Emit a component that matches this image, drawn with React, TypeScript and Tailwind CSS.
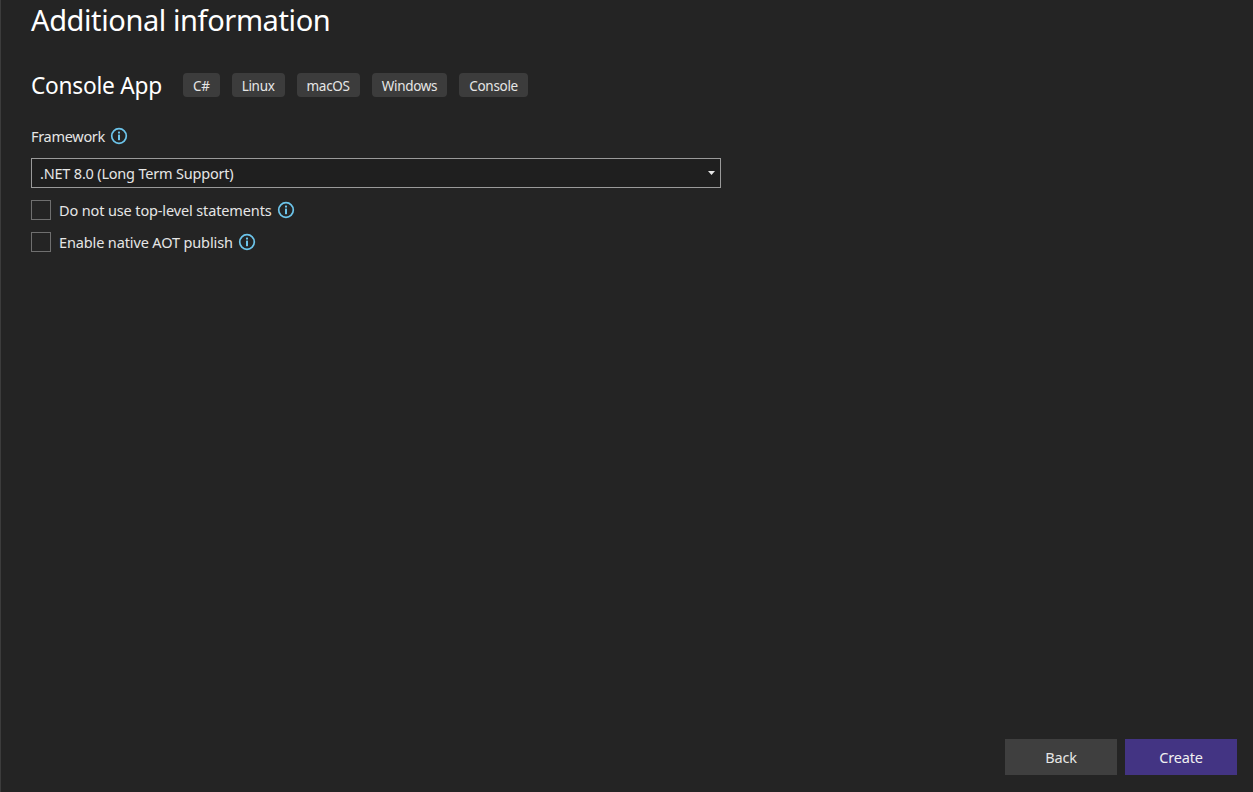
const tags = ["C#", "Linux", "macOS", "Windows", "Console"];

const InfoIcon = () => (
    <svg width="18" height="18" viewBox="0 0 18 18" fill="none" className="shrink-0">
        <circle cx="9" cy="9" r="7.3" stroke="#6cc4ea" strokeWidth="1.7" />
        <rect x="8" y="7.6" width="2" height="5.6" fill="#6cc4ea" />
        <rect x="8" y="4.6" width="2" height="1.9" fill="#6cc4ea" />
    </svg>
);

const Check = ({ label }: { label: string }) => (
    <div className="flex items-center h-5">
        <div className="w-5 h-5 border border-[#6f6f6f] bg-[#242424]"></div>
        <span className="ml-2 pt-[2px] text-[14.5px] text-[#e6e6e6] tracking-[-0.13px]">{label}</span>
        <span className="ml-[5px]"><InfoIcon /></span>
    </div>
);

const App = () => {
    return (
        <div className="w-full h-screen flex flex-col bg-[#242424] border-l border-[#3c3c3c] pl-[30px] pr-4 pb-[17px] overflow-hidden font-['Noto_Sans',sans-serif]">
            <h1 className="h-10 leading-10 text-[29px] text-white tracking-[-0.4px]">Additional information</h1>

            <div className="flex items-center mt-[33px] h-6">
                <span className="pt-[2px] text-[22.7px] text-white tracking-[-0.25px] w-[152px]">Console App</span>
                <div className="flex gap-3">
                    {tags.map((tag) => (
                        <span key={tag} className="h-6 px-2.5 pt-[2px] flex items-center rounded bg-[#3c3c3c] text-[13.5px] text-[#e6e6e6] tracking-[-0.3px]">{tag}</span>
                    ))}
                </div>
            </div>

            <div className="flex items-center mt-[29px] h-5">
                <span className="pt-[2px] text-[14.5px] text-[#e6e6e6] tracking-[-0.3px]">Framework</span>
                <span className="ml-[5px]"><InfoIcon /></span>
            </div>

            <div className="w-[690px] h-[30px] mt-[12px] flex items-center justify-between border border-[#9a9a9a] bg-[#1f1f1f] pl-2 pr-[5px]">
                <span className="pt-[2px] text-[14.5px] text-[#e6e6e6] tracking-[-0.2px]">.NET 8.0 (Long Term Support)</span>
                <svg width="7" height="4" viewBox="0 0 7 4"><path d="M0 0h7L3.5 4z" fill="#e6e6e6" /></svg>
            </div>

            <div className="flex flex-col gap-3 mt-3">
                <Check label="Do not use top-level statements" />
                <Check label="Enable native AOT publish" />
            </div>

            <div className="mt-auto flex justify-end gap-2">
                <button className="w-28 h-9 pt-[2px] bg-[#3f3f3f] text-[14.5px] text-[#e6e6e6] tracking-[-0.2px]">Back</button>
                <button className="w-28 h-9 pt-[2px] bg-[#433483] text-[14.5px] text-[#f0f0f0] tracking-[-0.2px]">Create</button>
            </div>
        </div>
    );
};

export default App;
